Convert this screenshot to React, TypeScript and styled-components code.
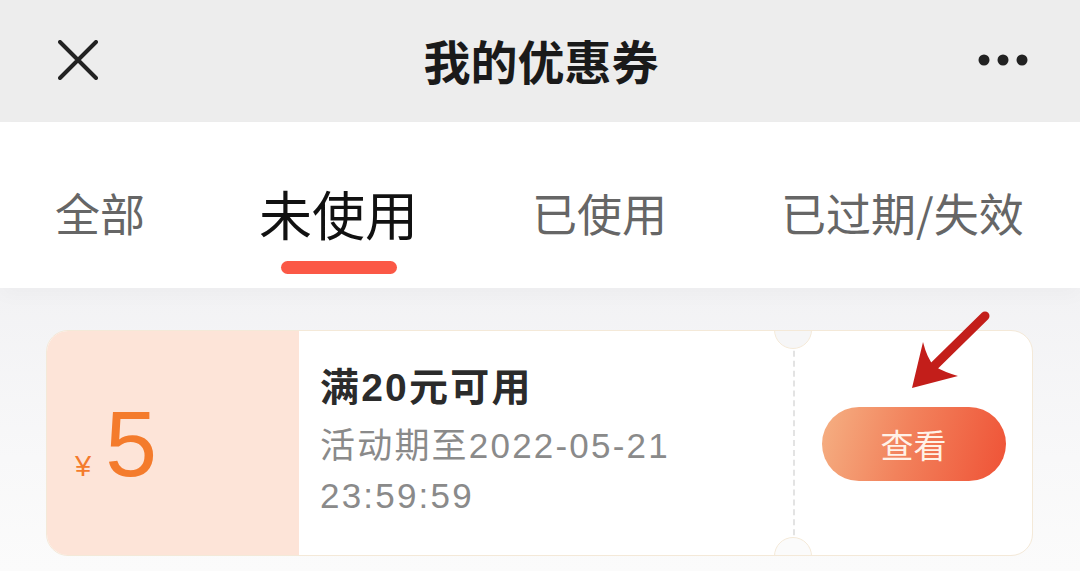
import React, { useState } from 'react'
import styled, { createGlobalStyle } from 'styled-components'

const GlobalStyle = createGlobalStyle`
  html, body {
    margin: 0;
    padding: 0;
    background: #f7f7f8;
  }
  body {
    font-family: "Liberation Sans", "Noto Sans CJK SC", sans-serif;
  }
  * {
    box-sizing: border-box;
  }
`

const Page = styled.div`
  width: 1080px;
  height: 571px;
  overflow: hidden;
  display: flex;
  flex-direction: column;
`

const NavBar = styled.header`
  height: 122px;
  flex-shrink: 0;
  background: #ededed;
  display: grid;
  grid-template-columns: 160px 1fr 160px;
  align-items: center;
  padding-bottom: 2px;
`

const NavButton = styled.button<{ $align: 'start' | 'end' }>`
  background: none;
  border: 0;
  padding: 0;
  display: flex;
  justify-content: ${(p) => (p.$align === 'start' ? 'flex-start' : 'flex-end')};
  padding-left: ${(p) => (p.$align === 'start' ? '58px' : '0')};
  padding-right: ${(p) => (p.$align === 'end' ? '52px' : '0')};
  color: #222;
  cursor: pointer;
`

const NavTitle = styled.h1`
  margin: 0;
  text-align: center;
  font-family: "Noto Sans CJK SC", sans-serif;
  font-size: 47px;
  font-weight: 700;
  color: #1a1a1a;
  line-height: 60px;
  padding-left: 2px;
`

const TabBar = styled.nav`
  height: 166px;
  flex-shrink: 0;
  background: #fff;
  display: flex;
  align-items: flex-start;
  gap: 114px;
  padding: 59px 0 0 55px;
  position: relative;
  z-index: 1;
  box-shadow: 0 8px 18px rgba(0, 0, 0, 0.025);
`

const Tab = styled.div<{ $active: boolean }>`
  position: relative;
  font-family: "Noto Sans CJK SC", sans-serif;
  font-size: ${(p) => (p.$active ? '53px' : '45px')};
  line-height: 64px;
  color: ${(p) => (p.$active ? '#111' : '#666')};
  white-space: nowrap;
  cursor: pointer;

  &::after {
    content: '';
    display: ${(p) => (p.$active ? 'block' : 'none')};
    position: absolute;
    left: 50%;
    top: 80px;
    width: 116px;
    height: 13px;
    margin-left: -58px;
    border-radius: 7px;
    background: #fb5846;
  }
`

const Content = styled.main`
  flex: 1;
  position: relative;
  background: linear-gradient(180deg, #f2f2f4 0%, #f8f8f9 60%, #fbfbfb 100%);
  padding: 42px 47px 0 46px;
`

const Card = styled.section`
  position: relative;
  height: 226px;
  display: flex;
  border: 1.5px solid #f4e9d8;
  border-radius: 22px;
  background: #fff;
  overflow: hidden;
`

const Notch = styled.span<{ $side: 'top' | 'bottom' }>`
  position: absolute;
  left: 727px;
  ${(p) => (p.$side === 'top' ? 'top: -20px;' : 'bottom: -20px;')}
  width: 38px;
  height: 38px;
  border-radius: 50%;
  border: 1.5px solid #f4e9d8;
  background: ${(p) => (p.$side === 'top' ? '#f6f6f7' : '#fbfbfb')};
`

const AmountBox = styled.div`
  width: 252px;
  flex-shrink: 0;
  background: #fde4d8;
  display: flex;
  align-items: center;
  padding-left: 28px;
  padding-top: 2px;
`

const Amount = styled.div`
  display: flex;
  align-items: baseline;
  gap: 14px;
  color: #f47b2c;
  font-family: "Liberation Sans", sans-serif;
`

const Currency = styled.span`
  font-size: 29px;
`

const Value = styled.span`
  font-size: 93px;
  line-height: 1;
`

const Info = styled.div`
  width: 494px;
  flex-shrink: 0;
  display: flex;
  flex-direction: column;
  justify-content: center;
  gap: 8px;
  padding: 0 0 2px 21px;
`

const InfoTitle = styled.div`
  font-family: "Liberation Sans", "Noto Sans CJK SC", sans-serif;
  font-size: 39px;
  font-weight: 700;
  letter-spacing: 2.2px;
  line-height: 50px;
  color: #2b2b2b;
`

const InfoDesc = styled.div`
  font-family: "Liberation Sans", "Noto Sans CJK SC", sans-serif;
  font-size: 35px;
  letter-spacing: 2.2px;
  line-height: 50px;
  color: #8a8a8a;
`

const Action = styled.div`
  flex: 1;
  border-left: 2px dashed #e3e3e3;
  display: flex;
  align-items: center;
  justify-content: center;
  padding-top: 2px;
`

const ViewButton = styled.button`
  width: 184px;
  height: 74px;
  border: 0;
  border-radius: 37px;
  background: linear-gradient(105deg, #f5b083 0%, #f2825c 45%, #ef5236 100%);
  color: #fff2e8;
  font-family: "Noto Sans CJK SC", sans-serif;
  font-size: 33px;
  line-height: 1;
  cursor: pointer;
`

const Pointer = styled.svg`
  position: absolute;
  left: 900px;
  top: 16px;
`

const tabs = ['全部', '未使用', '已使用', '已过期/失效']

export default function App() {
  const [active, setActive] = useState(1)
  return (
    <Page>
      <GlobalStyle />
      <NavBar>
        <NavButton $align="start" aria-label="关闭">
          <svg width="40" height="40" viewBox="0 0 40 40">
            <path d="M2 2 L38 38 M38 2 L2 38" stroke="#222" strokeWidth="4" strokeLinecap="round" />
          </svg>
        </NavButton>
        <NavTitle>我的优惠券</NavTitle>
        <NavButton $align="end" aria-label="更多">
          <svg width="50" height="12" viewBox="0 0 50 12">
            <circle cx="6" cy="6" r="5.5" fill="#222" />
            <circle cx="25" cy="6" r="5.5" fill="#222" />
            <circle cx="44" cy="6" r="5.5" fill="#222" />
          </svg>
        </NavButton>
      </NavBar>

      <TabBar>
        {tabs.map((t, i) => (
          <Tab key={t} $active={i === active} onClick={() => setActive(i)}>
            {t}
          </Tab>
        ))}
      </TabBar>

      <Content>
        <Card>
          <AmountBox>
            <Amount>
              <Currency>¥</Currency>
              <Value>5</Value>
            </Amount>
          </AmountBox>
          <Info>
            <InfoTitle>满20元可用</InfoTitle>
            <InfoDesc>
              活动期至2022-05-21
              <br />
              23:59:59
            </InfoDesc>
          </Info>
          <Action>
            <ViewButton>查看</ViewButton>
          </Action>
          <Notch $side="top" />
          <Notch $side="bottom" />
        </Card>

        {/* red annotation arrow pointing at the button */}
        <Pointer width="100" height="100" viewBox="0 0 100 100">
          <path d="M85 12 L30 66" stroke="#c31e1a" strokeWidth="9" strokeLinecap="round" />
          <path d="M12 84 L23 38 Q27 54 34 62 Q44 68 58 72 Z" fill="#c31e1a" />
        </Pointer>
      </Content>
    </Page>
  )
}
